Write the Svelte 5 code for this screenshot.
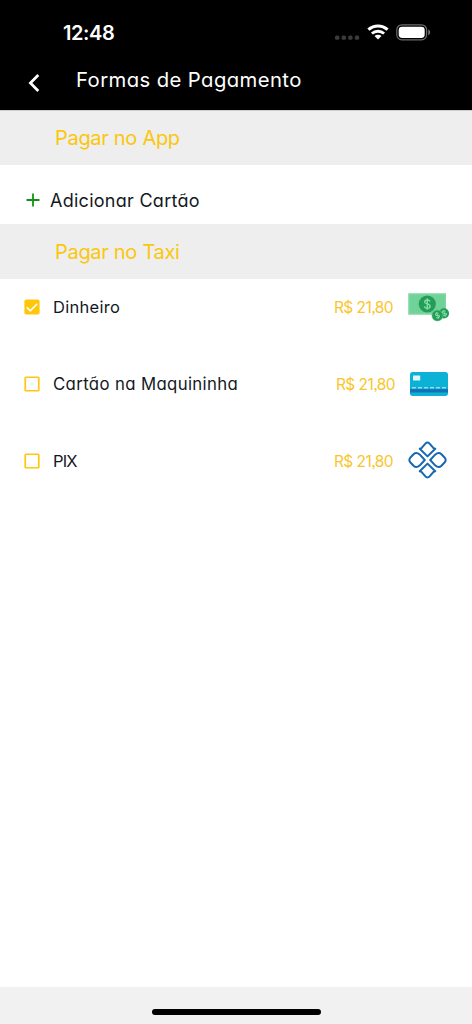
<script>
  const options = [
    { id: 'cash', label: 'Dinheiro', price: 'R$ 21,80', checked: true },
    { id: 'card', label: 'Cartão na Maquininha', price: 'R$ 21,80', checked: false },
    { id: 'pix', label: 'PIX', price: 'R$ 21,80', checked: false }
  ];
</script>

<div class="screen">
  <header>
    <div class="status">
      <span class="time">12:48</span>
      <div class="signals">
        <svg class="dots" width="25" height="5" viewBox="0 0 25 5" fill="#3b3b3b">
          <rect x="0" y=".4" width="4.4" height="4.4" rx="1.6" />
          <rect x="6.6" y=".4" width="4.4" height="4.4" rx="1.6" />
          <rect x="13.2" y=".4" width="4.4" height="4.4" rx="1.6" />
          <rect x="19.8" y=".4" width="4.4" height="4.4" rx="1.6" />
        </svg>
        <svg class="wifi" width="22" height="16" viewBox="0 0 22 16" fill="none" stroke="#fff">
          <path d="M1.4 5.7C6.9 .7 15.1 .7 20.6 5.7" stroke-width="3.1" />
          <path d="M4.9 9.5C8.4 6.4 13.6 6.4 17.1 9.5" stroke-width="2.9" />
          <path d="M11 15.6 7.5 12.1C9.4 10.4 12.6 10.4 14.5 12.1Z" fill="#fff" stroke="none" />
        </svg>
        <svg class="battery" width="35" height="17" viewBox="0 0 35 17">
          <rect x=".8" y=".8" width="29.8" height="15" rx="5" fill="none" stroke="#6d6b6b" stroke-width="1.2" />
          <rect x="2.7" y="2.7" width="26" height="11.2" rx="3.4" fill="#fff" />
          <path d="M32.3 5.5C34.8 6.5 34.8 10.2 32.3 11.2Z" fill="#777" />
        </svg>
      </div>
    </div>
    <div class="nav">
      <svg width="12" height="18" viewBox="0 0 12 18" fill="none" stroke="#fff" stroke-width="2.7">
        <path d="M10.3 1 2.4 9l7.9 8" />
      </svg>
      <h1>Formas de Pagamento</h1>
    </div>
  </header>

  <h2 class="app">Pagar no App</h2>
  <div class="add">
    <svg width="14" height="14" viewBox="0 0 14 14" stroke="#119311" stroke-width="1.8">
      <path d="M7 .5v13M.5 7h13" />
    </svg>
    <span>Adicionar Cartão</span>
  </div>
  <h2>Pagar no Taxi</h2>

  <main>
    {#each options as o}
      <div class="row {o.id}">
        <svg class="check" width="16" height="16" viewBox="0 0 16 16" fill="none">
          {#if o.checked}
            <rect x=".4" y=".4" width="15.2" height="15.2" rx="1.8" fill="#ffc60b" />
            <path d="m2.8 8.3 3.5 3.5 7-7.1" stroke="#fff" stroke-width="1.6" />
          {:else}
            <rect x="1.25" y="1.25" width="13.5" height="13.5" rx=".8" stroke="#ffc60b" stroke-width="1.7" />
          {/if}
        </svg>
        <span class="label">{o.label}</span>
        <span class="price">{o.price}</span>
        {#if o.id === 'cash'}
          <svg class="pic" width="42" height="30" viewBox="0 0 42 30">
            <rect x=".4" y=".4" width="37.6" height="21.2" fill="#70d298" />
            <rect x="1.1" y="1.1" width="36.2" height="19.8" fill="none" stroke="#82d9a5" stroke-width="1" />
            <circle cx="19.3" cy="11" r="8.6" fill="#249d59" />
            <path d="M22 8.5C21.5 6.4 16.7 6.3 16.7 8.9 16.7 11.5 22.1 10.4 22.1 13.2 22.1 15.8 16.9 15.8 16.5 13.3M19.3 5.2v11.6" fill="none" stroke="#82dda6" stroke-width="1.4" />
            <circle cx="36" cy="20.3" r="5.1" fill="#249d59" />
            <circle cx="29.4" cy="22.5" r="5.5" fill="#249d59" stroke="#66c98f" stroke-width=".6" />
            <g fill="none" stroke="#82dda6" stroke-width="1">
              <path transform="rotate(-20 29.4 22.5)" d="M31.2 21c-.6-1.3-3.4-1.2-3.4.2 0 1.6 3.5.8 3.5 2.5 0 1.6-3.1 1.5-3.6.2M29.5 19.1v6.9" />
              <path transform="translate(6.9 -2.2) rotate(-20 29.4 22.5)" d="M31.2 21c-.6-1.3-3.4-1.2-3.4.2 0 1.6 3.5.8 3.5 2.5 0 1.6-3.1 1.5-3.6.2M29.5 19.1v6.9" />
            </g>
          </svg>
        {:else if o.id === 'card'}
          <svg class="pic" width="38" height="24" viewBox="0 0 38 24">
            <rect width="38" height="24" rx="2.7" fill="#0cb2d5" />
            <rect y="17.1" width="38" height="3.4" fill="#1670b6" />
            <rect x="3" y="3.6" width="7.2" height="5" rx=".5" fill="#dff5fa" />
            <path d="M2 15.8h36" stroke="#cff1f7" stroke-width="1" stroke-dasharray="4 2" />
          </svg>
        {:else}
          <svg class="pic" width="39" height="38" viewBox="0 0 39 38" fill="none" stroke="#1768b1" stroke-width="2" stroke-linejoin="round">
            <path d="M19.5 15.4 11.7 7.8Q13 7.6 13.9 6.7L17.4 2.6Q19.5.3 21.6 2.6L25.1 6.7Q26 7.6 27.3 7.8Z" />
            <path d="M19.5 22.6 11.7 30.2Q13 30.4 13.9 31.3L17.4 35.4Q19.5 37.7 21.6 35.4L25.1 31.3Q26 30.4 27.3 30.2Z" />
            <path d="M16.8 19 11.6 13.4Q10 11.9 8.2 11.9 6.9 11.9 5.8 13L2.2 16.8Q.5 19 2.2 21.2L5.8 25Q6.9 26.1 8.2 26.1 10 26.1 11.6 24.6Z" />
            <path d="M22.2 19 27.4 13.4Q29 11.9 30.8 11.9 32.1 11.9 33.2 13L36.8 16.8Q38.5 19 36.8 21.2L33.2 25Q32.1 26.1 30.8 26.1 29 26.1 27.4 24.6Z" />
          </svg>
        {/if}
      </div>
    {/each}
  </main>

  <footer><div class="home"></div></footer>
</div>

<style>
  :global(body) { margin: 0; background: #fff; }
  .screen {
    display: flex; flex-direction: column; width: 472px; height: 1024px;
    overflow: hidden; background: #fff; color: #14191e;
    font-family: Inter, "Liberation Sans", sans-serif; font-feature-settings: "cv11" 1, "ss03" 1;
    white-space: nowrap;
  }
  header { height: 110px; flex: none; background: #000; color: #fff; }
  .status { display: flex; align-items: flex-start; height: 60px; }
  .time {
    margin: 21px 0 0 63px; font-size: 20px; line-height: 24px; font-weight: 600;
    letter-spacing: -.4px; font-feature-settings: normal;
  }
  .signals { display: flex; margin: 24px 41px 0 auto; }
  .dots { margin: 11px 7px 0 0; }
  .wifi { margin-right: 7px; }
  .nav { display: flex; height: 50px; }
  .nav svg { margin: 14px 0 0 28px; }
  h1 { margin: 5px 0 0 36px; font-size: 20.3px; line-height: 30px; font-weight: 400; letter-spacing: .4px; }
  h2 {
    flex: none; box-sizing: border-box; margin: 0; padding-left: 55px; height: 55px;
    background: #eee; color: #fac70e; font-size: 20px; line-height: 57px; font-weight: 400;
    letter-spacing: -.3px; font-feature-settings: normal;
  }
  h2.app { border-top: 1px solid #ccc; line-height: 55px; }
  .add { display: flex; align-items: center; box-sizing: border-box; height: 59px; padding: 11px 0 0 26px; flex: none; font-size: 18px; letter-spacing: .27px; }
  .add span { margin-left: 10px; }
  main { flex: 1; margin-top: -11px; }
  .row { display: flex; align-items: center; height: 77px; }
  .check { margin-left: 24px; }
  .label { margin-left: 13px; font-size: 16.5px; letter-spacing: .3px; }
  .card .label { font-size: 16.8px; letter-spacing: .35px; }
  .pix .label { letter-spacing: -.9px; }
  .price { margin-left: auto; padding-top: 1px; color: #fac52c; font-size: 15.5px; letter-spacing: -.55px; }
  .pic { flex: none; margin-left: 15px; margin-right: 22px; }
  .card .pic { margin-right: 24px; }
  .pix .pic { margin-right: 25px; margin-top: -1px; }
  .cash .pic { margin-top: 2px; }
  footer { flex: none; height: 37px; background: #f1f1f1; display: flex; justify-content: center; }
  .home { width: 169px; height: 6px; margin-top: 22px; border-radius: 3px; background: #000; }
</style>
